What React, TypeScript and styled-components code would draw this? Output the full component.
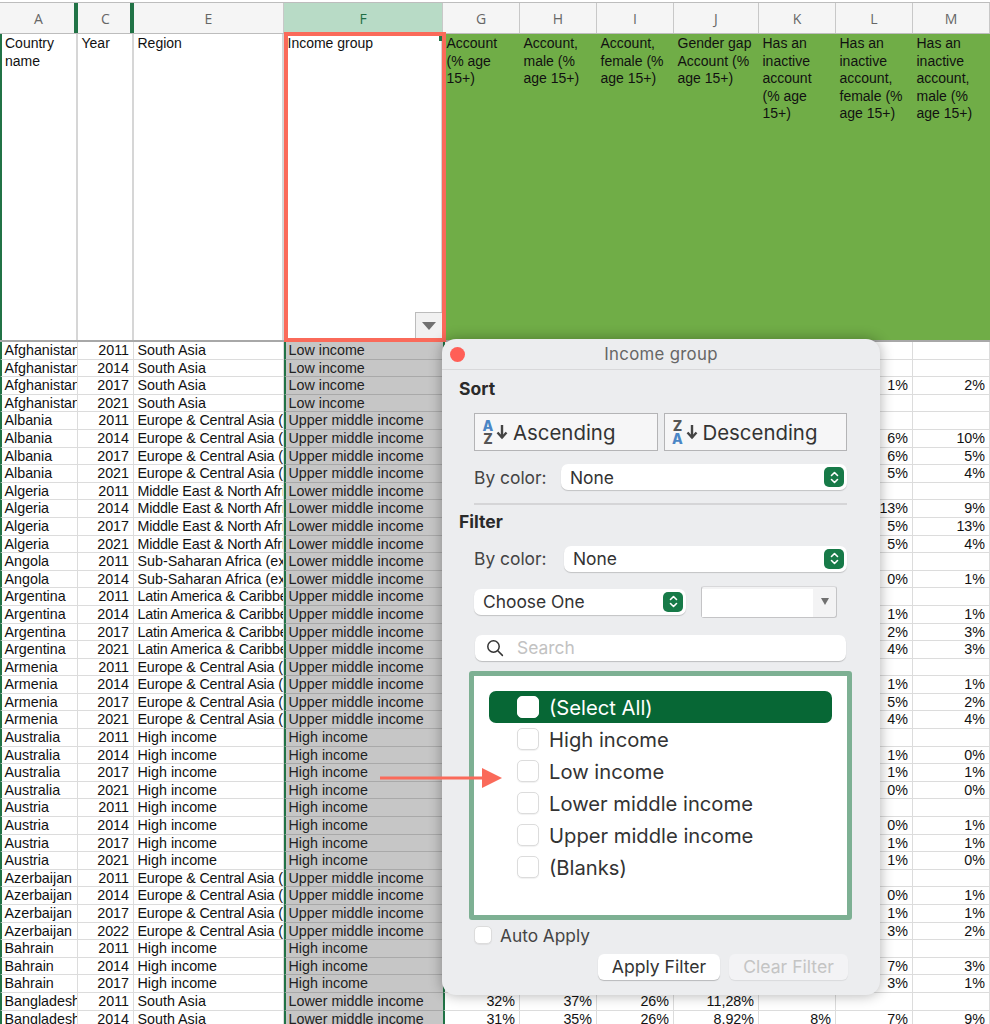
import React from "react";
import styled, { createGlobalStyle } from "styled-components";

const Global = createGlobalStyle`
  html, body { margin: 0; padding: 0; background: #fff; overflow: hidden; }
  * { box-sizing: border-box; }
`;

const COLS = "78px 56px 150px 159px 77px 77px 77px 85px 77px 77px 77px";

const Sheet = styled.div`
  position: relative;
  width: 990px;
  height: 1024px;
  overflow: hidden;
  background: #fff;
  padding-top: 2px;
  font-family: "Liberation Sans", Arial, sans-serif;
  font-size: 14px;
  color: #111;
`;
const HeaderRow = styled.div`
  display: grid;
  grid-template-columns: ${COLS};
  height: 32px;
  border-top: 1px solid #bdbdbd;
  border-bottom: 1px solid #bdbdbd;
`;
const HeaderCell = styled.div<{ $active?: boolean; $mark?: boolean }>`
  position: relative;
  display: flex;
  align-items: center;
  justify-content: center;
  background: ${(p) => (p.$active ? "#b8dbc6" : "#f5f5f5")};
  color: ${(p) => (p.$active ? "#1f6e43" : "#666")};
  border-right: 1px solid #c8c8c8;
  font-family: "Open Sans", sans-serif;
  font-size: 14px;
  &::after {
    content: "";
    display: ${(p) => (p.$mark ? "block" : "none")};
    position: absolute;
    top: 0;
    bottom: 0;
    right: -2px;
    width: 5px;
    background: #217346;
  }
`;
const TitleRow = styled.div`
  display: grid;
  grid-template-columns: ${COLS};
  height: 308px;
  border-bottom: 2px solid #a8a8a8;
`;
const TitleCell = styled.div<{ $green?: boolean; $edge?: boolean }>`
  position: relative;
  padding: 1px ${(p) => (p.$green ? "5.5px" : "3px")} 0 ${(p) => (p.$edge ? "3px" : "3.5px")};
  line-height: 17.5px;
  background: ${(p) => (p.$green ? "#70ad47" : "#fff")};
  border-right: ${(p) => (p.$green ? "none" : "2px solid #d6d6d6")};
  border-left: ${(p) => (p.$edge ? "2px solid #217346" : "none")};
`;
const RedFrame = styled.div`
  position: absolute;
  top: -2px;
  left: 0;
  right: -5px;
  bottom: -2px;
  border: 4px solid #fa6a5a;
  z-index: 2;
`;
const FillHandle = styled.div`
  position: absolute;
  top: 0;
  right: 0;
  width: 3px;
  height: 5px;
  background: #217346;
`;
const FilterButton = styled.div`
  position: absolute;
  right: 0;
  bottom: 0;
  width: 27px;
  height: 26px;
  display: flex;
  align-items: center;
  justify-content: center;
  background: #f1f1f1;
  border-left: 1px solid #bcbcbc;
  border-top: 1px solid #bcbcbc;
  &::after {
    content: "";
    border-left: 7px solid transparent;
    border-right: 7px solid transparent;
    border-top: 8px solid #707070;
  }
`;
const DataGrid = styled.div`
  display: grid;
  grid-template-columns: ${COLS};
  grid-auto-rows: 17.6px;
`;
const Cell = styled.div<{ $right?: boolean; $edge?: boolean; $income?: boolean; $after?: boolean; $tight?: boolean }>`
  white-space: nowrap;
  overflow: hidden;
  padding: 0 ${(p) => (p.$right ? "4px" : "0")} 0 ${(p) => (p.$edge ? "2.5px" : p.$income ? "2.5px" : "3.5px")};
  text-align: ${(p) => (p.$right ? "right" : "left")};
  font-size: 14.3px;
  letter-spacing: ${(p) => (p.$tight ? "-0.18px" : "0")};
  line-height: 16px;
  background: ${(p) => (p.$income ? "#c6c6c6" : "#fff")};
  color: ${(p) => (p.$income ? "#222" : "#111")};
  border-bottom: 1.5px solid ${(p) => (p.$income ? "#a9a9a9" : "#dcdcdc")};
  border-right: ${(p) => (p.$income ? "none" : "1.5px solid #dcdcdc")};
  border-left: ${(p) =>
    p.$edge || p.$income || p.$after ? "2px solid #217346" : "none"};
`;

const Arrow = styled.svg`
  position: absolute;
  left: 378px;
  top: 766px;
  z-index: 6;
`;

const Popover = styled.div`
  position: absolute;
  left: 442px;
  top: 339px;
  width: 438px;
  height: 656px;
  z-index: 5;
  background: #ecedef;
  border-radius: 14px;
  box-shadow: 0 0 14px rgba(0, 0, 0, 0.32);
  font-family: Inter, "Liberation Sans", sans-serif;
  color: #333;
  display: flex;
  flex-direction: column;
`;
const TitleBar = styled.div`
  position: relative;
  height: 31px;
  flex: none;
  display: flex;
  align-items: center;
  justify-content: center;
  border-bottom: 1.5px solid #d8d8da;
  font-size: 16.8px;
  color: #666;
  letter-spacing: 0.3px;
`;
const CloseDot = styled.div`
  position: absolute;
  left: 8px;
  top: 8px;
  width: 15px;
  height: 15px;
  border-radius: 50%;
  background: #ff5f57;
`;
const Body = styled.div`
  flex: 1;
  display: flex;
  flex-direction: column;
  padding: 0 27px 0 27px;
`;
const SectionLabel = styled.div<{ $top: number }>`
  margin: ${(p) => p.$top}px 0 0 -10px;
  height: 20px;
  line-height: 20px;
  font-size: 17.5px;
  font-weight: 700;
  color: #2a2a2a;
`;
const SortRow = styled.div`
  display: flex;
  margin: 14px 6px 0 5px;
  gap: 6px;
`;
const SortButton = styled.div`
  flex: 1;
  height: 38px;
  display: flex;
  align-items: center;
  padding-left: 6px;
  background: #f6f6f7;
  border: 1.5px solid #b4b4b6;
  font-size: 20.4px;
  color: #333;
`;
const Letters = styled.div`
  display: flex;
  flex-direction: column;
  font-size: 14px;
  line-height: 13px;
  font-weight: 800;
  width: 14px;
  text-align: center;
`;
const Letter = styled.span<{ $blue?: boolean }>`
  color: ${(p) => (p.$blue ? "#4b86c6" : "#555")};
`;
const ArrowIcon = styled.svg`
  margin: 0 5px 0 1px;
  flex: none;
`;
const ColorRow = styled.div<{ $top: number }>`
  display: flex;
  align-items: center;
  margin: ${(p) => p.$top}px 6px 0 5px;
  height: 26px;
  font-size: 17.4px;
  color: #444;
  justify-content: space-between;
`;
const SelectBox = styled.div<{ $w: number; $h?: number }>`
  width: ${(p) => p.$w}px;
  height: ${(p) => p.$h ?? 26}px;
  display: flex;
  align-items: center;
  justify-content: space-between;
  padding: 0 3px 0 9px;
  background: #fff;
  border-radius: 7px;
  box-shadow: 0 1px 1px rgba(0, 0, 0, 0.18);
  font-size: 17.4px;
  color: #333;
`;
const Stepper = styled.div`
  width: 20px;
  height: 20px;
  border-radius: 5px;
  background: #177a48;
  display: flex;
  align-items: center;
  justify-content: center;
`;
const Divider = styled.div`
  margin: 13px 6px 0 5px;
  height: 1.5px;
  background: #d5d5d7;
`;
const ChooseRow = styled.div`
  display: flex;
  align-items: center;
  margin: 14px 0 0 5px;
  gap: 15px;
  height: 32px;
`;
const Combo = styled.div`
  position: relative;
  width: 136px;
  height: 32px;
  display: flex;
  background: #f3f3f4;
  border: 1px solid #c4c4c6;
  border-top-color: #d8d8da;
  border-radius: 3px;
`;
const ComboField = styled.div`
  flex: 1;
  background: #fff;
  margin-top: 2px;
`;
const ComboCaret = styled.div`
  width: 23px;
  display: flex;
  justify-content: center;
  padding-top: 11px;
  &::after {
    content: "";
    height: 0;
    border-left: 4px solid transparent;
    border-right: 4px solid transparent;
    border-top: 7px solid #707070;
  }
`;
const SearchBox = styled.div`
  margin: 17px 7px 0 6px;
  height: 26px;
  display: flex;
  align-items: center;
  gap: 13px;
  padding-left: 11px;
  background: #fff;
  border-radius: 7px;
  box-shadow: 0 1px 1px rgba(0, 0, 0, 0.2);
  font-size: 17.4px;
  color: #c2c2c2;
`;
const ListBox = styled.div`
  margin: 10px 1px 0 0;
  height: 249px;
  background: #fff;
  border: 5px solid #7db093;
  border-radius: 3px;
  padding: 15px 15px 0 15px;
  display: flex;
  flex-direction: column;
`;
const ListRow = styled.div<{ $selected?: boolean }>`
  height: 32px;
  flex: none;
  display: flex;
  align-items: center;
  gap: 10px;
  padding-left: 28px;
  border-radius: 7px;
  background: ${(p) => (p.$selected ? "#076735" : "transparent")};
  color: ${(p) => (p.$selected ? "#fff" : "#333")};
  font-size: 20.2px;
`;
const ListLabel = styled.span`
  margin-top: 2px;
`;
const Check = styled.div<{ $size: number; $solid?: boolean }>`
  width: ${(p) => p.$size}px;
  height: ${(p) => p.$size}px;
  flex: none;
  background: #fff;
  border-radius: 5px;
  border: 1px solid ${(p) => (p.$solid ? "#fff" : "#dcdcdc")};
  box-shadow: 0 1px 1px rgba(0, 0, 0, 0.06);
`;
const AutoRow = styled.div`
  display: flex;
  align-items: center;
  gap: 8px;
  margin: 6px 0 0 5px;
  height: 19px;
  font-size: 17.3px;
  color: #444;
`;
const ButtonRow = styled.div`
  display: flex;
  justify-content: flex-end;
  gap: 9px;
  margin: 9px 5px 0 0;
`;
const ActionButton = styled.div<{ $disabled?: boolean; $w: number }>`
  width: ${(p) => p.$w}px;
  height: 26px;
  display: flex;
  align-items: center;
  justify-content: center;
  border-radius: 6px;
  background: ${(p) => (p.$disabled ? "#f3f3f5" : "#fff")};
  color: ${(p) => (p.$disabled ? "#c4c4c4" : "#333")};
  box-shadow: 0 1px 1px rgba(0, 0, 0, ${(p) => (p.$disabled ? 0.08 : 0.22)});
  font-size: 17.6px;
`;

const SA = "South Asia";
const EU = "Europe & Central Asia (excluding high income)";
const ME = "Middle East & North Africa (excluding high income)";
const SS = "Sub-Saharan Africa (excluding high income)";
const LA = "Latin America & Caribbean (excluding high income)";
const HI = "High income";
const LI = "Low income";
const LM = "Lower middle income";
const UM = "Upper middle income";

type Row = [string, number, string, string, string?, string?, string?, string?, string?, string?, string?];
const rows: Row[] = [
  ["Afghanistan", 2011, SA, LI],
  ["Afghanistan", 2014, SA, LI],
  ["Afghanistan", 2017, SA, LI, , , , , , "1%", "2%"],
  ["Afghanistan", 2021, SA, LI],
  ["Albania", 2011, EU, UM],
  ["Albania", 2014, EU, UM, , , , , , "6%", "10%"],
  ["Albania", 2017, EU, UM, , , , , , "6%", "5%"],
  ["Albania", 2021, EU, UM, , , , , , "5%", "4%"],
  ["Algeria", 2011, ME, LM],
  ["Algeria", 2014, ME, LM, , , , , , "13%", "9%"],
  ["Algeria", 2017, ME, LM, , , , , , "5%", "13%"],
  ["Algeria", 2021, ME, LM, , , , , , "5%", "4%"],
  ["Angola", 2011, SS, LM],
  ["Angola", 2014, SS, LM, , , , , , "0%", "1%"],
  ["Argentina", 2011, LA, UM],
  ["Argentina", 2014, LA, UM, , , , , , "1%", "1%"],
  ["Argentina", 2017, LA, UM, , , , , , "2%", "3%"],
  ["Argentina", 2021, LA, UM, , , , , , "4%", "3%"],
  ["Armenia", 2011, EU, UM],
  ["Armenia", 2014, EU, UM, , , , , , "1%", "1%"],
  ["Armenia", 2017, EU, UM, , , , , , "5%", "2%"],
  ["Armenia", 2021, EU, UM, , , , , , "4%", "4%"],
  ["Australia", 2011, HI, HI],
  ["Australia", 2014, HI, HI, , , , , , "1%", "0%"],
  ["Australia", 2017, HI, HI, , , , , , "1%", "1%"],
  ["Australia", 2021, HI, HI, , , , , , "0%", "0%"],
  ["Austria", 2011, HI, HI],
  ["Austria", 2014, HI, HI, , , , , , "0%", "1%"],
  ["Austria", 2017, HI, HI, , , , , , "1%", "1%"],
  ["Austria", 2021, HI, HI, , , , , , "1%", "0%"],
  ["Azerbaijan", 2011, EU, UM],
  ["Azerbaijan", 2014, EU, UM, , , , , , "0%", "1%"],
  ["Azerbaijan", 2017, EU, UM, , , , , , "1%", "1%"],
  ["Azerbaijan", 2022, EU, UM, , , , , , "3%", "2%"],
  ["Bahrain", 2011, HI, HI],
  ["Bahrain", 2014, HI, HI, , , , , , "7%", "3%"],
  ["Bahrain", 2017, HI, HI, , , , , , "3%", "1%"],
  ["Bangladesh", 2011, SA, LM, "32%", "37%", "26%", "11,28%"],
  ["Bangladesh", 2014, SA, LM, "31%", "35%", "26%", "8.92%", "8%", "7%", "9%"],
];

const letters = ["A", "C", "E", "F", "G", "H", "I", "J", "K", "L", "M"];
const titles = [
  "Country name",
  "Year",
  "Region",
  "Income group",
  "Account (% age 15+)",
  "Account, male (% age 15+)",
  "Account, female (% age 15+)",
  "Gender gap Account (% age 15+)",
  "Has an inactive account (% age 15+)",
  "Has an inactive account, female (% age 15+)",
  "Has an inactive account, male (% age 15+)",
];

const StepperIcon = () => (
  <Stepper>
    <svg width="11" height="15" viewBox="0 0 11 15" fill="none" stroke="#fff" strokeWidth="1.6" strokeLinecap="round" strokeLinejoin="round">
      <path d="M2.5 5.5 5.5 2.5 8.5 5.5" />
      <path d="M2.5 9.5 5.5 12.5 8.5 9.5" />
    </svg>
  </Stepper>
);

const DownArrow = () => (
  <ArrowIcon width="12" height="16" viewBox="0 0 12 16" fill="none" stroke="#444" strokeWidth="2.4">
    <path d="M6 1v13" />
    <path d="M1.5 8.5 6 13.5l4.5-5" />
  </ArrowIcon>
);

const Magnifier = () => (
  <svg width="18" height="18" viewBox="0 0 18 18" fill="none" stroke="#333" strokeWidth="1.5" strokeLinecap="round">
    <circle cx="7.5" cy="7.5" r="5.7" />
    <path d="m11.8 11.8 4.6 4.6" />
  </svg>
);

export default function App() {
  return (
    <Sheet>
      <Global />
      <HeaderRow>
        {letters.map((l, i) => (
          <HeaderCell key={l} $active={l === "F"} $mark={i < 2}>
            {l}
          </HeaderCell>
        ))}
      </HeaderRow>
      <TitleRow>
        {titles.map((t, i) => (
          <TitleCell key={t} $green={i > 3} $edge={i === 0}>
            {t}
            {i === 3 && (
              <RedFrame>
                <FillHandle />
                <FilterButton />
              </RedFrame>
            )}
          </TitleCell>
        ))}
      </TitleRow>
      <DataGrid>
        {rows.map((r, ri) =>
          letters.map((_, ci) => (
            <Cell
              key={`${ri}-${ci}`}
              $right={ci === 1 || ci > 3}
              $edge={ci === 0}
              $income={ci === 3}
              $after={ci === 4}
              $tight={ci === 2 && String(r[ci]).includes("&")}
            >
              {r[ci]}
            </Cell>
          ))
        )}
      </DataGrid>

      <Popover>
        <TitleBar>
          <CloseDot />
          Income group
        </TitleBar>
        <Body>
          <SectionLabel $top={9}>Sort</SectionLabel>
          <SortRow>
            <SortButton>
              <Letters>
                <Letter $blue>A</Letter>
                <Letter>Z</Letter>
              </Letters>
              <DownArrow />
              Ascending
            </SortButton>
            <SortButton>
              <Letters>
                <Letter>Z</Letter>
                <Letter $blue>A</Letter>
              </Letters>
              <DownArrow />
              Descending
            </SortButton>
          </SortRow>
          <ColorRow $top={13}>
            By color:
            <SelectBox $w={286}>
              None
              <StepperIcon />
            </SelectBox>
          </ColorRow>
          <Divider />
          <SectionLabel $top={7}>Filter</SectionLabel>
          <ColorRow $top={14}>
            By color:
            <SelectBox $w={283}>
              None
              <StepperIcon />
            </SelectBox>
          </ColorRow>
          <ChooseRow>
            <SelectBox $w={212}>
              Choose One
              <StepperIcon />
            </SelectBox>
            <Combo>
              <ComboField />
              <ComboCaret />
            </Combo>
          </ChooseRow>
          <SearchBox>
            <Magnifier />
            Search
          </SearchBox>
          <ListBox>
            <ListRow $selected>
              <Check $size={22} $solid />
              <ListLabel>(Select All)</ListLabel>
            </ListRow>
            {[HI, LI, LM, UM, "(Blanks)"].map((t) => (
              <ListRow key={t}>
                <Check $size={22} />
                <ListLabel>{t}</ListLabel>
              </ListRow>
            ))}
          </ListBox>
          <AutoRow>
            <Check $size={18} />
            Auto Apply
          </AutoRow>
          <ButtonRow>
            <ActionButton $w={122}>Apply Filter</ActionButton>
            <ActionButton $w={119} $disabled>
              Clear Filter
            </ActionButton>
          </ButtonRow>
        </Body>
      </Popover>

      <Arrow width="126" height="24" viewBox="0 0 126 24">
        <rect x="2" y="10.5" width="104" height="3" fill="#fa6a5a" />
        <path d="M104 2 124 12 104 22Z" fill="#fa6a5a" />
      </Arrow>
    </Sheet>
  );
}
